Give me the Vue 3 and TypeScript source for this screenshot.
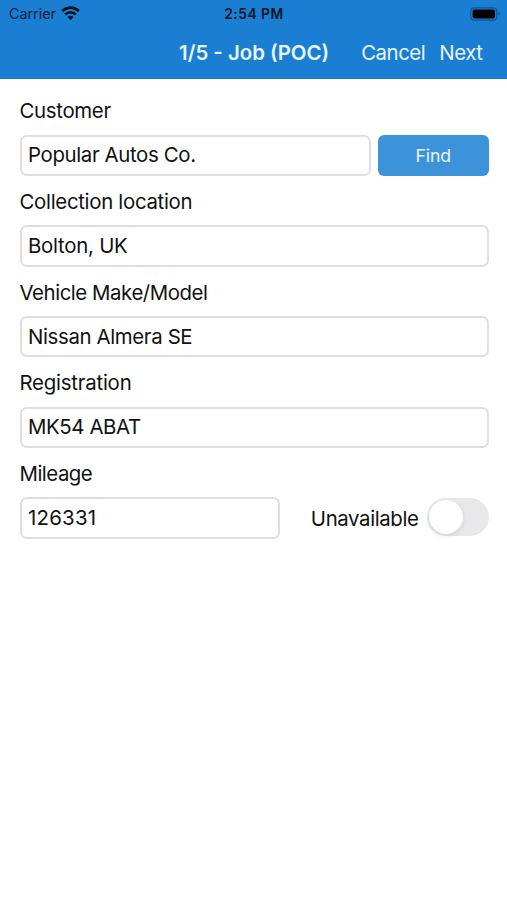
<script setup lang="ts">
import { ref } from 'vue'

const customer = ref('Popular Autos Co.')
const location = ref('Bolton, UK')
const vehicle = ref('Nissan Almera SE')
const registration = ref('MK54 ABAT')
const mileage = ref('126331')
const unavailable = ref(false)
</script>

<template>
  <div class="screen">
    <header class="header">
      <div class="status">
        <div class="carrier">
          <span class="carrier-name">Carrier</span>
          <svg class="wifi" width="19" height="15" viewBox="0 0 19 15" fill="none">
            <path d="M1.2 5.1A11.8 11.8 0 0 1 17.8 5.1" stroke="#03101c" stroke-width="2.8" />
            <path d="M4.2 8.5A7.5 7.5 0 0 1 14.8 8.5" stroke="#03101c" stroke-width="2.6" />
            <path d="M9.5 14L6.5 11Q9.5 8.5 12.5 11Z" fill="#03101c" />
          </svg>
        </div>
        <span class="clock">2:54 PM</span>
        <svg class="battery" width="31" height="14" viewBox="0 0 31 14">
          <rect x="0.8" y="0.8" width="26" height="12.4" rx="3.4" fill="none" stroke="#0f5590" stroke-width="1.2" />
          <rect x="2.6" y="2.6" width="22.4" height="8.8" rx="1.8" fill="#000" />
          <path d="M28.3 5V9Q30 8.4 30 7T28.3 5Z" fill="#0f5590" />
        </svg>
      </div>
      <nav class="nav">
        <h1 class="title">1/5 - Job (POC)</h1>
        <button class="nav-button cancel">Cancel</button>
        <button class="nav-button next">Next</button>
      </nav>
    </header>

    <main class="form">
      <label class="label customer" for="customer">Customer</label>
      <div class="row">
        <input id="customer" v-model="customer" class="input v-customer" />
        <button class="find">Find</button>
      </div>
      <label class="label collection" for="location">Collection location</label>
      <div class="row">
        <input id="location" v-model="location" class="input v-location" />
      </div>
      <label class="label vehicle" for="vehicle">Vehicle Make/Model</label>
      <div class="row">
        <input id="vehicle" v-model="vehicle" class="input v-vehicle" />
      </div>
      <label class="label registration" for="registration">Registration</label>
      <div class="row">
        <input id="registration" v-model="registration" class="input v-registration" />
      </div>
      <label class="label mileage" for="mileage">Mileage</label>
      <div class="row">
        <input id="mileage" v-model="mileage" class="input short v-mileage" />
        <span class="toggle-label">Unavailable</span>
        <button
          class="toggle"
          :class="{ on: unavailable }"
          role="switch"
          :aria-checked="unavailable"
          @click="unavailable = !unavailable"
        >
          <span class="knob"></span>
        </button>
      </div>
    </main>
  </div>
</template>

<style>
body {
  background: #fff;
}
</style>

<style scoped>
.screen {
  box-sizing: border-box;
  width: 507px;
  height: 900px;
  overflow: hidden;
  background: #fff;
  color: #111;
  font-family: Inter, "Liberation Sans", sans-serif;
}
button {
  border: 0;
  padding: 0;
  background: none;
  font-family: inherit;
  cursor: pointer;
}
.header {
  height: 79px;
  background: #1a7fd3;
}
.status {
  display: grid;
  grid-template-columns: 1fr auto 1fr;
  align-items: center;
  height: 27px;
  padding: 0 6px 0 9px;
  color: #06203a;
}
.carrier {
  display: flex;
  align-items: center;
  gap: 5.5px;
}
.carrier-name {
  font-size: 14.3px;
  line-height: 26px;
}
.wifi {
  display: block;
  margin-top: -1px;
}
.clock {
  margin-right: 2px;
  color: #041424;
  font-size: 13.8px;
  font-weight: 600;
  line-height: 28px;
  letter-spacing: 0.5px;
}
.battery {
  display: block;
  justify-self: end;
  margin-top: -1px;
}
.nav {
  display: flex;
  align-items: center;
  justify-content: flex-end;
  height: 52px;
  padding-right: 24.5px;
  color: #e8f4ff;
}
.title {
  margin: 0 32px 0 0;
  font-size: 20.4px;
  font-weight: 600;
  line-height: 52px;
  white-space: nowrap;
}
.nav-button {
  color: inherit;
  font-size: 20.4px;
  line-height: 52px;
  letter-spacing: -0.45px;
}
.cancel {
  margin-right: 14px;
}
.form {
  padding: 6.4px 18.5px 0 19.5px;
}
.label {
  box-sizing: border-box;
  display: flex;
  align-items: center;
  height: 49.2px;
  padding-top: 1.6px;
  font-size: 20.4px;
}
.customer {
  letter-spacing: -0.32px;
}
.collection {
  letter-spacing: -0.3px;
}
.vehicle {
  letter-spacing: -0.44px;
}
.registration {
  letter-spacing: -0.22px;
}
.mileage {
  letter-spacing: -0.5px;
}
.row {
  display: flex;
  align-items: center;
  height: 41.5px;
}
.input {
  box-sizing: border-box;
  flex: 1;
  min-width: 0;
  height: 41.5px;
  padding: 0 7px 1.4px 6.5px;
  border: 2px solid #dfdfdf;
  border-radius: 6.5px;
  outline: none;
  background: #fff;
  color: inherit;
  font-family: inherit;
  font-size: 20.4px;
}
.v-customer {
  letter-spacing: -0.36px;
}
.v-location {
  letter-spacing: -0.25px;
}
.v-vehicle {
  letter-spacing: -0.36px;
}
.v-registration {
  letter-spacing: -0.4px;
}
.v-mileage {
  letter-spacing: 0.25px;
}
.short {
  flex: 0 0 260.5px;
}
.find {
  flex: none;
  width: 110.5px;
  height: 41.5px;
  margin-left: 7px;
  border-radius: 6px;
  background: #3d93da;
  color: #eaf5ff;
  font-size: 17.6px;
  letter-spacing: -0.1px;
}
.toggle-label {
  margin-left: auto;
  padding-top: 1px;
  font-size: 20.4px;
  letter-spacing: -0.38px;
  white-space: nowrap;
}
.toggle {
  flex: none;
  width: 62px;
  height: 38px;
  margin: -3px 0 0 8px;
  padding: 2px;
  border-radius: 19px;
  background: #e8e8ea;
}
.knob {
  display: block;
  width: 34px;
  height: 34px;
  border-radius: 50%;
  background: #fff;
  box-shadow: 0 2px 5px rgba(0, 0, 0, 0.1);
}
.toggle.on {
  background: #34c759;
}
.toggle.on .knob {
  margin-left: auto;
}
</style>
